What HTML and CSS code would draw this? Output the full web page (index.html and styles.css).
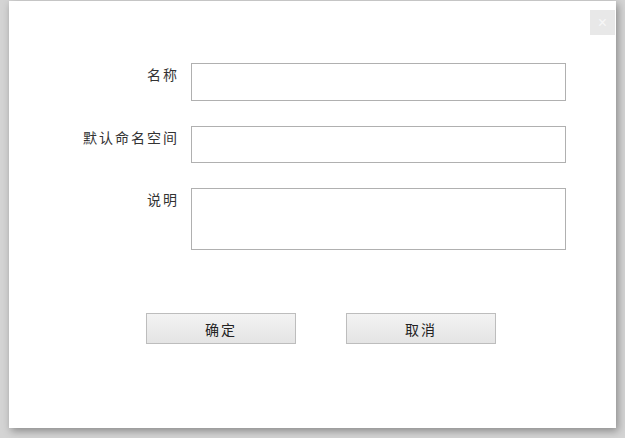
FILE: index.html
```html
<!DOCTYPE html>
<html lang="zh-CN">
<head>
    <meta charset="UTF-8">
    <meta name="viewport" content="width=device-width, initial-scale=1.0">
    <title>新建命名空间</title>
    <link rel="stylesheet" href="styles.css">
</head>
<body>
    <div class="dialog">
        <button class="close-btn" title="关闭">&times;</button>
        <form class="form">
            <label class="label" for="name">名称</label>
            <input id="name" class="field field-name" type="text">

            <label class="label" for="ns">默认命名空间</label>
            <input id="ns" class="field field-ns" type="text">

            <label class="label" for="desc">说明</label>
            <textarea id="desc" class="field field-desc"></textarea>
        </form>
        <div class="actions">
            <button class="btn">确定</button>
            <button class="btn">取消</button>
        </div>
    </div>
</body>
</html>
```

FILE: styles.css
```css
html, body {
    height: 100%;
}
body {
    margin: 0;
    background-color: #d4d4d4;
    font-family: "Liberation Sans", "Noto Sans CJK SC", sans-serif;
    color: #333;
    overflow: hidden;
}
.dialog {
    position: relative;
    width: 607px;
    height: 427px;
    margin: 1px 0 0 9px;
    background-color: #fff;
    box-shadow: 2px 3px 8px rgba(0,0,0,0.35);
}
.close-btn {
    position: absolute;
    top: 9px;
    right: 1px;
    width: 25px;
    height: 25px;
    padding: 0;
    border: none;
    background-color: #e8e8e8;
    color: #f7f7f7;
    font-size: 16px;
    line-height: 25px;
    cursor: pointer;
}
.form {
    display: grid;
    grid-template-columns: 169px 375px;
    column-gap: 13px;
    row-gap: 25px;
    padding-top: 62px;
}
.label {
    text-align: right;
    font-size: 14px;
    letter-spacing: 2px;
    margin-right: -1px;
    padding-top: 2px;
    line-height: 20px;
}
.field {
    box-sizing: border-box;
    margin: 0;
    border: 1px solid #b0b0b0;
    background-color: #fff;
    font: inherit;
    resize: none;
}
.field-name {
    height: 38px;
}
.field-ns {
    height: 37px;
}
.field-desc {
    height: 62px;
}
.actions {
    display: flex;
    gap: 50px;
    padding: 63px 0 0 137px;
}
.btn {
    width: 150px;
    height: 31px;
    border: 1px solid #bdbdbd;
    background: linear-gradient(#f3f3f3, #e4e4e4);
    font-family: "Liberation Sans", "Noto Sans CJK SC", sans-serif;
    font-size: 14px;
    letter-spacing: 2px;
    color: #222;
    cursor: pointer;
}
```
